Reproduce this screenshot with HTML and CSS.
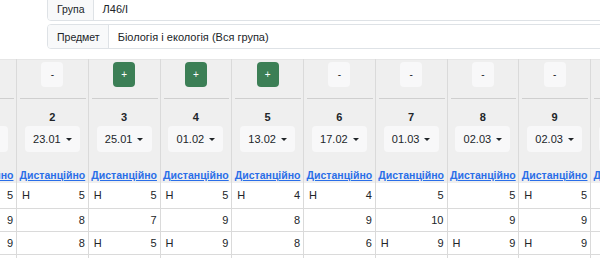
FILE: index.html
```html
<!DOCTYPE html>
<html lang="uk">
<head>
  <meta charset="UTF-8" />
  <meta name="viewport" content="width=device-width, initial-scale=1.0" />
  <title>Журнал</title>
  <link rel="stylesheet" href="styles.css">
</head>
<body>
  <div class="filters">
    <div class="input-group">
      <span class="ig-label">Група</span>
      <span class="ig-value">Л46/І</span>
    </div>
    <div class="input-group">
      <span class="ig-label">Предмет</span>
      <span class="ig-value">Біологія і екологія (Вся група)</span>
    </div>
  </div>

  <div class="journal">
    <table class="grid">
      <thead>
        <tr>
          <th><div class="head"><span class="btn-toggle">-</span><hr><span class="num">1</span><span class="date">21.01</span><a href="#" class="kind">Дистанційно</a></div></th>
          <th><div class="head"><span class="btn-toggle">-</span><hr><span class="num">2</span><span class="date">23.01</span><a href="#" class="kind">Дистанційно</a></div></th>
          <th><div class="head"><span class="btn-toggle on">+</span><hr><span class="num">3</span><span class="date">25.01</span><a href="#" class="kind">Дистанційно</a></div></th>
          <th><div class="head"><span class="btn-toggle on">+</span><hr><span class="num">4</span><span class="date">01.02</span><a href="#" class="kind">Дистанційно</a></div></th>
          <th><div class="head"><span class="btn-toggle on">+</span><hr><span class="num">5</span><span class="date">13.02</span><a href="#" class="kind">Дистанційно</a></div></th>
          <th><div class="head"><span class="btn-toggle">-</span><hr><span class="num">6</span><span class="date">17.02</span><a href="#" class="kind">Дистанційно</a></div></th>
          <th><div class="head"><span class="btn-toggle">-</span><hr><span class="num">7</span><span class="date">01.03</span><a href="#" class="kind">Дистанційно</a></div></th>
          <th><div class="head"><span class="btn-toggle">-</span><hr><span class="num">8</span><span class="date">02.03</span><a href="#" class="kind">Дистанційно</a></div></th>
          <th><div class="head"><span class="btn-toggle">-</span><hr><span class="num">9</span><span class="date">02.03</span><a href="#" class="kind">Дистанційно</a></div></th>
          <th><div class="head"><span class="btn-toggle">-</span><hr><span class="num">10</span><span class="date">03.03</span><a href="#" class="kind">Дистанційно</a></div></th>
        </tr>
      </thead>
      <tbody>
        <tr>
          <td><div class="mark"><span></span><span>5</span></div></td>
          <td><div class="mark"><span>Н</span><span>5</span></div></td>
          <td><div class="mark"><span>Н</span><span>5</span></div></td>
          <td><div class="mark"><span>Н</span><span>5</span></div></td>
          <td><div class="mark"><span>Н</span><span>4</span></div></td>
          <td><div class="mark"><span>Н</span><span>4</span></div></td>
          <td><div class="mark"><span></span><span>5</span></div></td>
          <td><div class="mark"><span></span><span>5</span></div></td>
          <td><div class="mark"><span>Н</span><span>5</span></div></td>
          <td><div class="mark"><span></span><span></span></div></td>
        </tr>
        <tr>
          <td><div class="mark"><span></span><span>9</span></div></td>
          <td><div class="mark"><span></span><span>8</span></div></td>
          <td><div class="mark"><span></span><span>7</span></div></td>
          <td><div class="mark"><span></span><span>9</span></div></td>
          <td><div class="mark"><span></span><span>8</span></div></td>
          <td><div class="mark"><span></span><span>9</span></div></td>
          <td><div class="mark"><span></span><span>10</span></div></td>
          <td><div class="mark"><span></span><span>9</span></div></td>
          <td><div class="mark"><span></span><span>9</span></div></td>
          <td><div class="mark"><span></span><span></span></div></td>
        </tr>
        <tr>
          <td><div class="mark"><span></span><span>9</span></div></td>
          <td><div class="mark"><span></span><span>8</span></div></td>
          <td><div class="mark"><span>Н</span><span>5</span></div></td>
          <td><div class="mark"><span>Н</span><span>9</span></div></td>
          <td><div class="mark"><span></span><span>8</span></div></td>
          <td><div class="mark"><span></span><span>6</span></div></td>
          <td><div class="mark"><span>Н</span><span>9</span></div></td>
          <td><div class="mark"><span>Н</span><span>9</span></div></td>
          <td><div class="mark"><span>Н</span><span>9</span></div></td>
          <td><div class="mark"><span></span><span></span></div></td>
        </tr>
        <tr>
          <td><div class="mark"><span></span><span>8</span></div></td>
          <td><div class="mark"><span></span><span>7</span></div></td>
          <td><div class="mark"><span></span><span>8</span></div></td>
          <td><div class="mark"><span></span><span>9</span></div></td>
          <td><div class="mark"><span></span><span>7</span></div></td>
          <td><div class="mark"><span></span><span>8</span></div></td>
          <td><div class="mark"><span></span><span>9</span></div></td>
          <td><div class="mark"><span></span><span>8</span></div></td>
          <td><div class="mark"><span></span><span>9</span></div></td>
          <td><div class="mark"><span></span><span></span></div></td>
        </tr>
      </tbody>
    </table>
  </div>
</body>
</html>
```

FILE: styles.css
```css
:root{
  --text:#212529;
  --border:#dee2e6;
  --head-bg:#efefef;
  --cell-line:#dadada;
  --light-btn:#f8f8f9;
  --green:#3c7f56;
  --link:#2a6ee8;
}
*{box-sizing:border-box;margin:0;padding:0}
html,body{overflow:hidden}
body{font-family:'Liberation Sans',Arial,sans-serif;font-size:11px;color:var(--text);background:#fff}

.filters{display:flex;flex-direction:column;gap:3px;margin:-4px 0 0 47px;width:640px}
.input-group{display:flex;height:25px;border:1px solid var(--border);border-radius:4px;overflow:hidden}
.ig-label{display:flex;align-items:center;padding:0 8px 0 9px;background:#f8f9fa;border-right:1px solid var(--border);font-size:10.5px}
.ig-value{display:flex;align-items:center;padding:0 9px;flex:1}

.journal{margin-top:10px;overflow:hidden}
.grid{border-collapse:collapse;table-layout:fixed;width:717.5px;margin-left:-55.75px}
.grid th,.grid td{width:71.75px;border-left:1px solid var(--cell-line);border-right:1px solid var(--cell-line)}
.grid th{background:var(--head-bg);border-top:1px solid #e6e6e6;padding:0;vertical-align:top}
.head{display:flex;flex-direction:column;align-items:center;padding:2px 0 1px}
.head hr{align-self:stretch;border:none;height:1px;background:#cfcfcf;margin:11px 2px 0 3px}
.btn-toggle{width:22px;height:25px;border-radius:4px;background:var(--light-btn);display:flex;align-items:center;justify-content:center;font-size:10px;font-weight:normal}
.btn-toggle.on{background:var(--green);color:#fff}
.num{margin-top:11px;line-height:14px;font-size:11px;font-weight:bold}
.date{margin-top:2px;height:26px;width:55px;border-radius:4px;background:var(--light-btn);display:flex;align-items:center;justify-content:center;font-size:11px;font-weight:normal}
.date::after{content:"";margin-left:5px;border-top:3px solid var(--text);border-left:3px solid transparent;border-right:3px solid transparent}
.kind{margin-top:16px;line-height:14px;font-size:10.5px;font-weight:bold;color:var(--link);text-decoration:underline;white-space:nowrap}

.grid td{border-bottom:1px solid var(--cell-line);height:23px;padding:0 3px 0 5px;font-size:11px}
.grid tbody tr:first-child td{height:25px}
.mark{display:flex;justify-content:space-between}
```
